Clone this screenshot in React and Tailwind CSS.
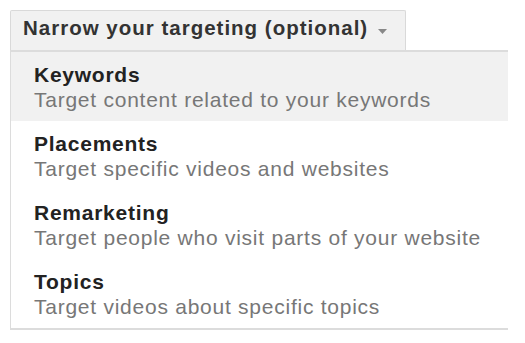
const options = [
  { title: 'Keywords', desc: 'Target content related to your keywords', active: true },
  { title: 'Placements', desc: 'Target specific videos and websites' },
  { title: 'Remarketing', desc: 'Target people who visit parts of your website' },
  { title: 'Topics', desc: 'Target videos about specific topics' },
];

export default function App() {
  return (
    <div className="w-[525px] h-[343px] bg-white pt-[10px] pl-[10px] font-['Liberation_Sans',Arial,sans-serif]">
      <button
        type="button"
        className="flex items-center gap-[10px] h-[40px] w-[396px] pl-[12px] pb-[4px] border border-b-0 border-[#d9d9d9] rounded-t-[2px] bg-[#f1f1f1] text-[20.5px] tracking-[1px] font-bold text-[#333]"
      >
        Narrow your targeting (optional)
        <svg width="9" height="5" viewBox="0 0 9 5" className="mt-[6px]">
          <path d="M0 0h9L4.5 5z" fill="#888" />
        </svg>
      </button>
      <div className="w-[498px] border-t-2 border-l border-b-2 border-[#dcdcdc]">
        {options.map((o) => (
          <div key={o.title} className={`h-[69px] pl-[23px] pt-[10px] tracking-[0.75px] ${o.active ? 'bg-[#f1f1f1]' : 'bg-white'}`}>
            <div className="text-[21px] leading-[25px] font-bold text-[#222]">{o.title}</div>
            <div className="text-[21px] leading-[25px] text-[#777]">{o.desc}</div>
          </div>
        ))}
      </div>
    </div>
  );
}
